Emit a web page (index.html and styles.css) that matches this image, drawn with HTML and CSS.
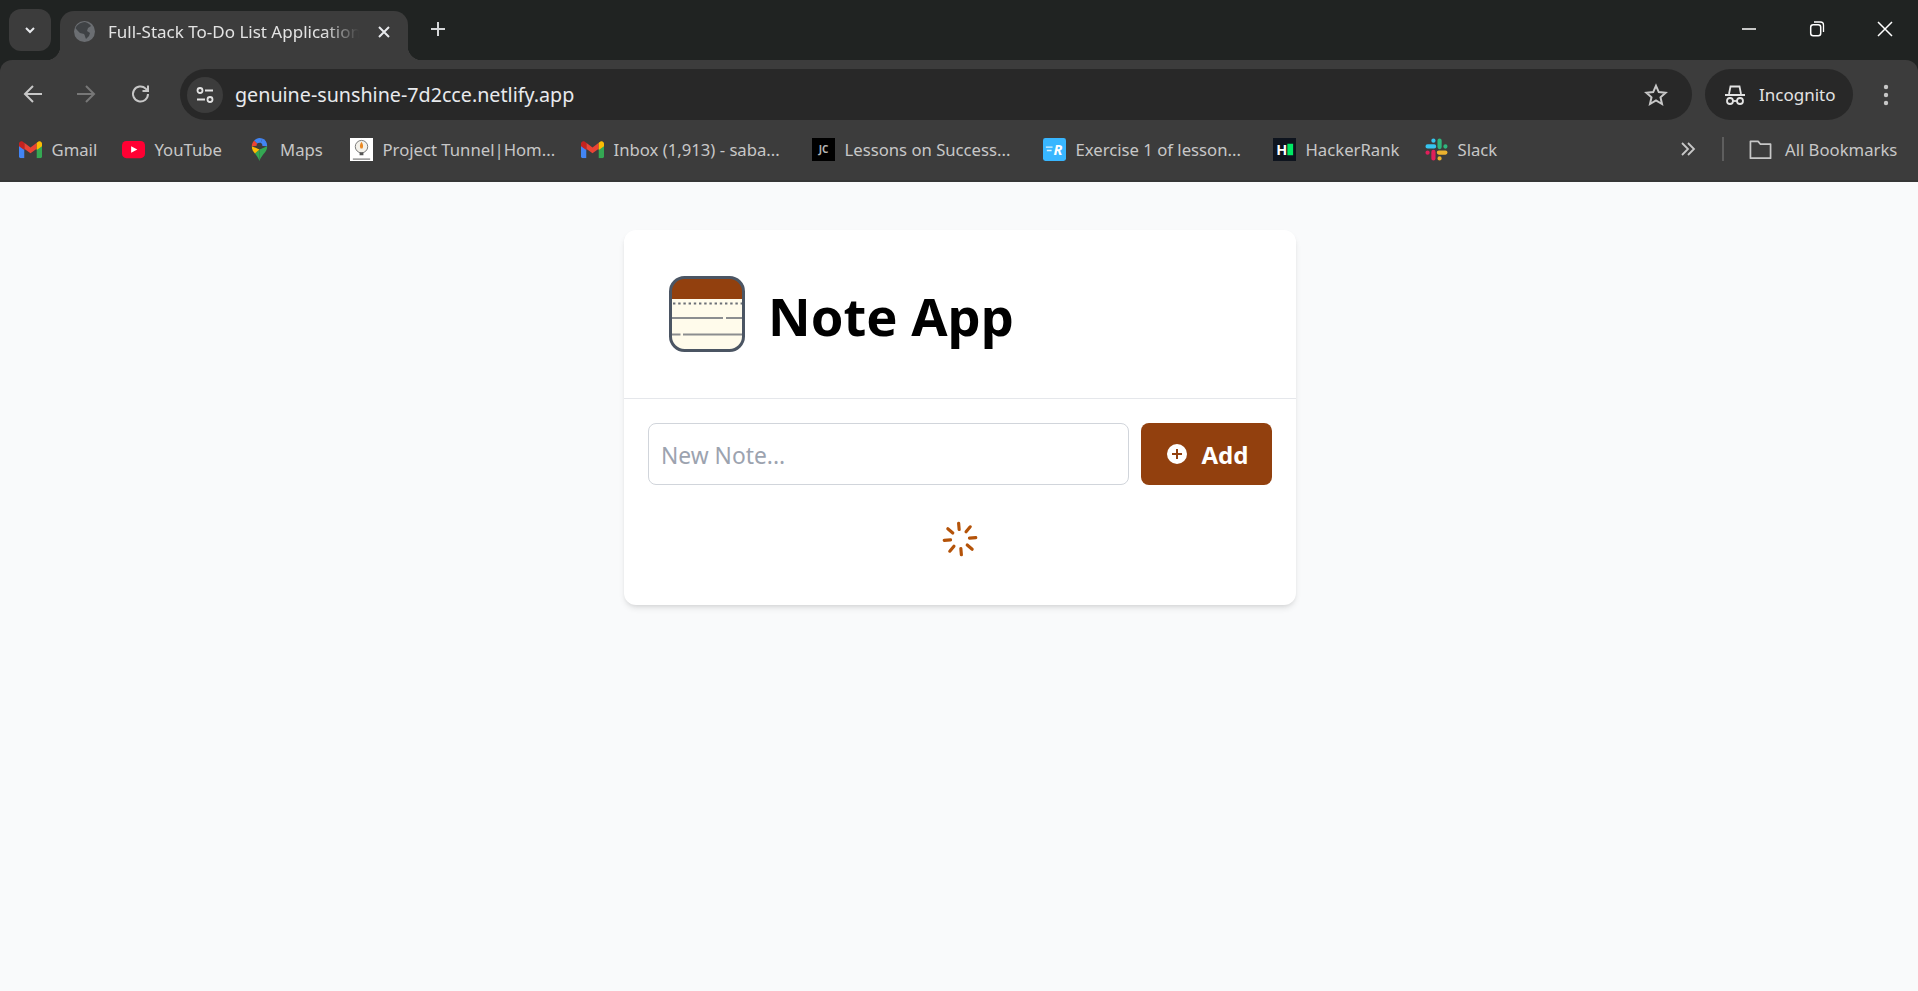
FILE: index.html
```html
<!DOCTYPE html>
<html lang="en">
  <head>
    <meta charset="UTF-8" />
    <meta name="viewport" content="width=device-width, initial-scale=1.0" />
    <link rel="stylesheet" href="styles.css">
    <title>Full-Stack To-Do List Application</title>
  </head>

  <body>
    <svg class="defs" width="0" height="0" aria-hidden="true">
      <symbol id="gmail" viewBox="0 0 24 18">
        <path fill="#4285f4" d="M0 4.500V16.400C0 17.300.7 18 1.600 18H5.500V8.200Z"/>
        <path fill="#34a853" d="M18.500 18h3.900c.9 0 1.600-.7 1.600-1.600V4.500L18.500 8.200Z"/>
        <path fill="#ea4335" d="M5.500 8.200V2L12 6.800 18.500 2V8.200L12 13Z"/>
        <path fill="#c5221f" d="M0 2.800V5.500L5.500 9.500V2L3.700.7C2.200-.4 0 .7 0 2.800Z"/>
        <path fill="#fbbc04" d="M18.500 2V9.500L24 5.500V2.800C24 .7 21.800-.4 20.300.7Z"/>
      </symbol>
    </svg>

    <header class="titlebar">
      <div class="tabsearch">
        <svg width="14" height="14" viewBox="0 0 14 14"><path d="M3 5l4 4 4-4" fill="none" stroke="#e8eaed" stroke-width="2"/></svg>
      </div>
      <div class="tab">
        <svg class="favicon" width="21" height="21" viewBox="0 0 21 21">
          <circle cx="10.500" cy="10.500" r="10.500" fill="#6b6e72"/>
          <path d="M11 1c3 1 5 2 6 4l-3 2-1 3 3 2-1 3-3 3c-1-2-1-4-2-5L6 12 3 9 1.500 7C3 4 6 1.500 11 1Z" fill="#3f4245"/>
        </svg>
        <span class="tab-title">Full-Stack To-Do List Application</span>
        <svg class="tab-close" width="14" height="14" viewBox="0 0 14 14"><path d="M2 2l10 10M12 2L2 12" stroke="#e8eaed" stroke-width="2"/></svg>
      </div>
      <svg class="newtab" width="18" height="18" viewBox="0 0 18 18"><path d="M9 2v14M2 9h14" stroke="#d5d7d9" stroke-width="2"/></svg>
      <div class="winctrls">
        <svg width="16" height="16" viewBox="0 0 16 16"><path d="M1 8h14" stroke="#fff" stroke-width="1.500"/></svg>
        <svg width="16" height="16" viewBox="0 0 16 16"><rect x="1.700" y="3.700" width="10" height="11" rx="2.500" fill="none" stroke="#fff" stroke-width="1.500"/><path d="M5 1h6.500c2 0 3 1 3 3v7" fill="none" stroke="#fff" stroke-width="1.300"/></svg>
        <svg width="16" height="16" viewBox="0 0 16 16"><path d="M1 1l14 14M15 1L1 15" stroke="#fff" stroke-width="1.500"/></svg>
      </div>
    </header>

    <div class="toolbar">
      <nav class="navbtns">
        <svg width="22" height="22" viewBox="0 0 22 22"><path d="M20 11H3M11 3l-8 8 8 8" fill="none" stroke="#c7c7c7" stroke-width="2"/></svg>
        <svg width="22" height="22" viewBox="0 0 22 22"><path d="M2 11h17M11 3l8 8-8 8" fill="none" stroke="#777" stroke-width="2"/></svg>
        <svg width="22" height="22" viewBox="0 0 22 22"><path d="M18 11a7.500 7.500 0 1 1-2.300-5.400L18 8M18 2.500V8h-5.500" fill="none" stroke="#c7c7c7" stroke-width="2"/></svg>
      </nav>
      <div class="omnibox">
        <div class="siteinfo">
          <svg width="20" height="20" viewBox="0 0 20 20" fill="none" stroke="#e3e3e3" stroke-width="1.800">
            <circle cx="5" cy="5.500" r="2.500"/><path d="M10 5.500h8M2 14.500h8"/><circle cx="15" cy="14.500" r="2.500"/>
          </svg>
        </div>
        <span class="url">genuine-sunshine-7d2cce.netlify.app</span>
        <svg class="star" width="24" height="24" viewBox="0 0 24 24"><path d="M12 2.800l2.800 6.300 6.800.7-5.100 4.500 1.500 6.700-6-3.500-6 3.500 1.500-6.700L2.400 9.800l6.800-.7Z" fill="none" stroke="#c7c7c7" stroke-width="2"/></svg>
      </div>
      <div class="incognito">
        <svg width="24" height="24" viewBox="0 0 24 24" fill="none" stroke="#e3e3e3" stroke-width="1.800">
          <path d="M6 11l1.500-7.500h9L18 11M2 12h20"/><circle cx="7" cy="18" r="3"/><circle cx="17" cy="18" r="3"/><path d="M10 18h4"/>
        </svg>
        <span>Incognito</span>
      </div>
      <svg class="dots" width="6" height="24" viewBox="0 0 6 24"><circle cx="3" cy="4" r="2.200" fill="#c7c7c7"/><circle cx="3" cy="12" r="2.200" fill="#c7c7c7"/><circle cx="3" cy="20" r="2.200" fill="#c7c7c7"/></svg>
    </div>

    <div class="bookmarks">
      <a class="bm bm-gmail"><svg class="bm-icon" viewBox="0 0 24 24"><use href="#gmail" y="3" width="24" height="18"/></svg>Gmail</a>
      <a class="bm bm-yt">
        <svg class="bm-icon" viewBox="0 0 24 24"><rect y="3" width="24" height="18" rx="4.500" fill="#ff0033"/><path d="M9.500 8.500l6.500 3.500-6.500 3.500Z" fill="#fff"/></svg>YouTube</a>
      <a class="bm bm-maps">
        <svg class="bm-icon" viewBox="0 0 24 24">
          <path d="M12 24c-1-3-3-5.500-4.800-7.800L12 12Z" fill="#34a853"/>
          <path d="M12 24c1-3 3-5.500 4.500-7.500C18.500 14 20 12.500 20 8.500L12 12Z" fill="#34a853"/>
          <path d="M7.200 16.200C5.500 14 4 12 4 8.500L12 12Z" fill="#fbbc04"/>
          <path d="M4 8.500C4 6 5 4 6.500 2.500L12 8Z" fill="#ea4335"/>
          <path d="M6.500 2.500C8 1 10 0 12 0c1 0 2 .2 3 .5L12 8Z" fill="#4285f4"/>
          <path d="M15 .5C18 1.500 20 4.500 20 8.500L12 8Z" fill="#4285f4"/>
          <circle cx="12" cy="8" r="3" fill="#3c3c3c"/>
        </svg>Maps</a>
      <a class="bm bm-project">
        <svg class="bm-icon" viewBox="0 0 24 24">
          <rect width="24" height="24" fill="#fff"/>
          <circle cx="12" cy="9" r="6.500" fill="#f3f1ea" stroke="#777" stroke-width="1"/>
          <path d="M12 4c2 3 2 5 1 7h-2c-1-2-1-4 1-7Z" fill="#ea8a25"/>
          <path d="M10 15h4v3h-4Z" fill="#555"/>
          <path d="M3 22h18" stroke="#555" stroke-width="1"/>
        </svg>Project Tunnel|Hom...</a>
      <a class="bm bm-inbox"><svg class="bm-icon" viewBox="0 0 24 24"><use href="#gmail" y="3" width="24" height="18"/></svg>Inbox (1,913) - saba...</a>
      <a class="bm bm-jc"><span class="tile tile-jc">JC</span>Lessons on Success...</a>
      <a class="bm bm-exercise">
        <svg class="bm-icon" viewBox="0 0 24 24">
          <rect width="24" height="24" rx="2.500" fill="#38b6ff"/>
          <path d="M3 9.500h7M4 13h5" stroke="#d9f2ff" stroke-width="1.500"/>
          <text class="logo-r" x="11" y="18">R</text>
        </svg>Exercise 1 of lesson...</a>
      <a class="bm bm-hr">
        <svg class="bm-icon" viewBox="0 0 24 24">
          <rect width="24" height="24" fill="#0e141e"/>
          <text class="logo-h" x="3.500" y="17.500">H</text>
          <rect x="15" y="6" width="6" height="12" fill="#00ea64"/>
        </svg>HackerRank</a>
      <a class="bm bm-slack">
        <svg class="bm-icon" viewBox="0 0 24 24" fill="none" stroke-linecap="round" stroke-width="4.400">
          <path d="M2.700 8.800h6.800M8.800 2.700v.1" stroke="#36c5f0"/>
          <path d="M15.200 2.700v6.800M21.300 8.800v.1" stroke="#2eb67d"/>
          <path d="M14.500 15.200h6.800M15.200 21.300v.1" stroke="#ecb22e"/>
          <path d="M8.800 14.500v6.800M2.700 15.200v.1" stroke="#e01e5a"/>
        </svg>Slack</a>
      <svg class="bm-more" width="16" height="16" viewBox="0 0 16 16"><path d="M2 2l6 6-6 6M8 2l6 6-6 6" fill="none" stroke="#c7c7c7" stroke-width="1.800"/></svg>
      <span class="bm-sep"></span>
      <a class="bm bm-all">
        <svg class="bm-icon" viewBox="0 0 24 24"><path d="M1.500 3.500h8l2.500 3h10.500v14.500H1.500Z" fill="none" stroke="#c7c7c7" stroke-width="1.800" stroke-linejoin="round"/></svg>All Bookmarks</a>
    </div>

    <main class="page">
      <section class="card">
        <header class="card-head">
          <svg class="logo" width="80" height="80" viewBox="0 0 80 80">
            <rect x="3.500" y="3.500" width="73" height="73" rx="14" fill="#fffbeb"/>
            <path d="M3.500 25V17.500a14 14 0 0 1 14-14h45a14 14 0 0 1 14 14V25Z" fill="#92400e"/>
            <path d="M6 29.500h70" stroke="#6b6f76" stroke-width="2.200" stroke-dasharray="2.400 2.800"/>
            <path d="M4 44h52M59 44h18M4 60.500h9.500M16 60.500h61" stroke="#8b8d8f" stroke-width="1.800"/>
            <rect x="3.500" y="3.500" width="73" height="73" rx="14" fill="none" stroke="#4b5563" stroke-width="3"/>
          </svg>
          <h1 class="card-title">Note App</h1>
        </header>
        <div class="card-body">
          <form class="note-form">
            <input class="note-input" type="text" placeholder="New Note..." />
            <button class="add-btn" type="button">
              <svg width="20" height="20" viewBox="0 0 20 20"><circle cx="10" cy="10" r="10" fill="#fff"/><path d="M10 5v10M5 10h10" stroke="#92400e" stroke-width="2"/></svg>
              <span>Add</span>
            </button>
          </form>
          <div class="loading">
            <svg class="spinner" width="38" height="38" viewBox="0 0 24 24">
              <path d="M12 2v4M16.200 7.800l2.900-2.900M18 12h4M16.200 16.200l2.900 2.900M12 18v4M4.900 19.100l2.900-2.900M2 12h4M4.900 4.900l2.900 2.900" fill="none" stroke="#b45309" stroke-width="2" stroke-linecap="round"/>
            </svg>
          </div>
        </div>
      </section>
    </main>
  </body>
</html>
```

FILE: styles.css
```css
* {
  box-sizing: border-box;
}

html,
body {
  height: 100%;
}

body {
  margin: 0;
  display: flex;
  flex-direction: column;
  font-family: "Noto Sans", "Open Sans", sans-serif;
  background-color: #202322;
  overflow: hidden;
}

.defs {
  position: absolute;
}

/* browser chrome */
.titlebar {
  height: 60px;
  flex: none;
  display: flex;
  align-items: flex-end;
  padding-left: 9px;
  background-color: #202322;
}

.tabsearch {
  width: 42px;
  height: 42px;
  margin-bottom: 9px;
  border-radius: 12px;
  background-color: #3c3c3c;
  display: flex;
  align-items: center;
  justify-content: center;
}

.tab {
  position: relative;
  width: 348px;
  height: 49px;
  margin-left: 9px;
  padding: 0 17px 8px 14px;
  border-radius: 14px 14px 0 0;
  background-color: #3c3c3c;
  display: flex;
  align-items: center;
}

.tab::before,
.tab::after {
  content: "";
  position: absolute;
  bottom: 0;
  width: 14px;
  height: 14px;
}

.tab::before {
  left: -14px;
  background: radial-gradient(circle at 0 0, transparent 14px, #3c3c3c 14.500px);
}

.tab::after {
  right: -14px;
  background: radial-gradient(circle at 100% 0, transparent 14px, #3c3c3c 14.500px);
}

.favicon {
  flex: none;
}

.tab-title {
  flex: 1;
  min-width: 0;
  margin-left: 13px;
  font-size: 17px;
  color: #e3e3e3;
  white-space: nowrap;
  overflow: hidden;
  -webkit-mask-image: linear-gradient(to right, #000 86%, transparent 100%);
  mask-image: linear-gradient(to right, #000 86%, transparent 100%);
}

.tab-close {
  flex: none;
  margin-left: 18px;
}

.newtab {
  margin: 0 0 22px 21px;
}

.winctrls {
  margin-left: auto;
  margin-right: 25px;
  margin-bottom: 23px;
  display: flex;
  gap: 52px;
}

.toolbar {
  height: 60px;
  flex: none;
  display: flex;
  align-items: flex-start;
  padding: 9px 0 0 22px;
  background-color: #3c3c3c;
  border-radius: 12px 12px 0 0;
}

.navbtns {
  display: flex;
  gap: 31px;
  margin-top: 14px;
}

.navbtns svg:last-child {
  margin-left: 2px;
}

.omnibox {
  width: 1512px;
  height: 51px;
  margin-left: 28px;
  padding: 0 24px 0 7px;
  border-radius: 26px;
  background-color: #282828;
  display: flex;
  align-items: center;
}

.siteinfo {
  width: 36px;
  height: 36px;
  border-radius: 50%;
  background-color: #3c3c3c;
  display: flex;
  align-items: center;
  justify-content: center;
}

.url {
  margin-left: 12px;
  font-size: 19.700px;
  color: #e8eaed;
  white-space: nowrap;
}

.star {
  margin-left: auto;
}

.incognito {
  width: 148px;
  height: 51px;
  margin-left: 13px;
  padding-left: 18px;
  border-radius: 26px;
  background-color: #282828;
  display: flex;
  align-items: center;
  gap: 12px;
  font-size: 17px;
  color: #e3e3e3;
}

.dots {
  margin: 14px 0 0 30px;
}

.bookmarks {
  height: 62px;
  flex: none;
  display: flex;
  align-items: center;
  padding: 0 0 2px 19px;
  background-color: #3c3c3c;
  border-bottom: 2px solid #363636;
  font-size: 16.700px;
  color: #c7c7c7;
  white-space: nowrap;
}

.bm {
  flex: none;
  display: flex;
  align-items: center;
  gap: 9.500px;
}

.bm-icon,
.tile {
  flex: none;
  width: 23px;
  height: 23px;
}

/* each bookmark is as wide as it is in the strip */
.bm-gmail { width: 103px; }
.bm-yt { width: 127px; }
.bm-maps { width: 101px; }
.bm-project { width: 231px; }
.bm-inbox { width: 231px; }
.bm-jc { width: 231px; }
.bm-exercise { width: 230px; }
.bm-hr { width: 152px; }
.bm-slack { width: 255px; }

.bm-maps .bm-icon {
  margin-left: -1.500px;
}

.tile-jc {
  background-color: #000;
  color: #b5b5b5;
  font-size: 10px;
  font-weight: 700;
  line-height: 23px;
  text-align: center;
}

.logo-r {
  fill: #fff;
  font-size: 15px;
  font-weight: 700;
  font-style: italic;
}

.logo-h {
  fill: #fff;
  font-size: 15px;
  font-weight: 700;
}

.bm-more {
  flex: none;
}

.bm-sep {
  width: 2px;
  height: 24px;
  margin: 0 25px 0 26px;
  background-color: #5e5e5e;
}

.bm-all {
  gap: 13px;
}

/* page */
.page {
  flex: 1;
  padding: 48px 0 0 2px;
  background-color: #f9fafb;
}

.card {
  width: 672px;
  margin: 0 auto;
  background-color: #fff;
  border-radius: 12px;
  box-shadow: 0 4px 6px -1px rgba(0, 0, 0, 0.1), 0 2px 4px -2px rgba(0, 0, 0, 0.1);
}

.card-head {
  display: flex;
  align-items: center;
  gap: 21px;
  padding: 44px 44px 44px 43px;
  border-bottom: 1px solid #e5e7eb;
}

.card-title {
  margin: 5px 0 0;
  font-size: 52.500px;
  line-height: 1;
  font-weight: 700;
  color: #000;
}

.card-body {
  padding: 24px;
}

.note-form {
  display: flex;
  gap: 12px;
}

.note-input {
  flex: 1;
  min-width: 0;
  height: 62px;
  padding: 2px 12px 0;
  border: 1px solid #d1d5db;
  border-radius: 8px;
  background-color: #fff;
  font-family: inherit;
  font-size: 22.800px;
}

.note-input::placeholder {
  color: #9ca3af;
}

.add-btn {
  width: 131px;
  height: 62px;
  padding: 0 0 0 2px;
  border: none;
  border-radius: 8px;
  background-color: #92400e;
  color: #fff;
  font-family: inherit;
  font-size: 24px;
  font-weight: 700;
  display: flex;
  align-items: center;
  justify-content: center;
  gap: 15px;
}

.loading {
  display: flex;
  justify-content: center;
  padding: 35px 0 23px;
}

.spinner {
  display: block;
  transform: rotate(-5deg);
}
```
